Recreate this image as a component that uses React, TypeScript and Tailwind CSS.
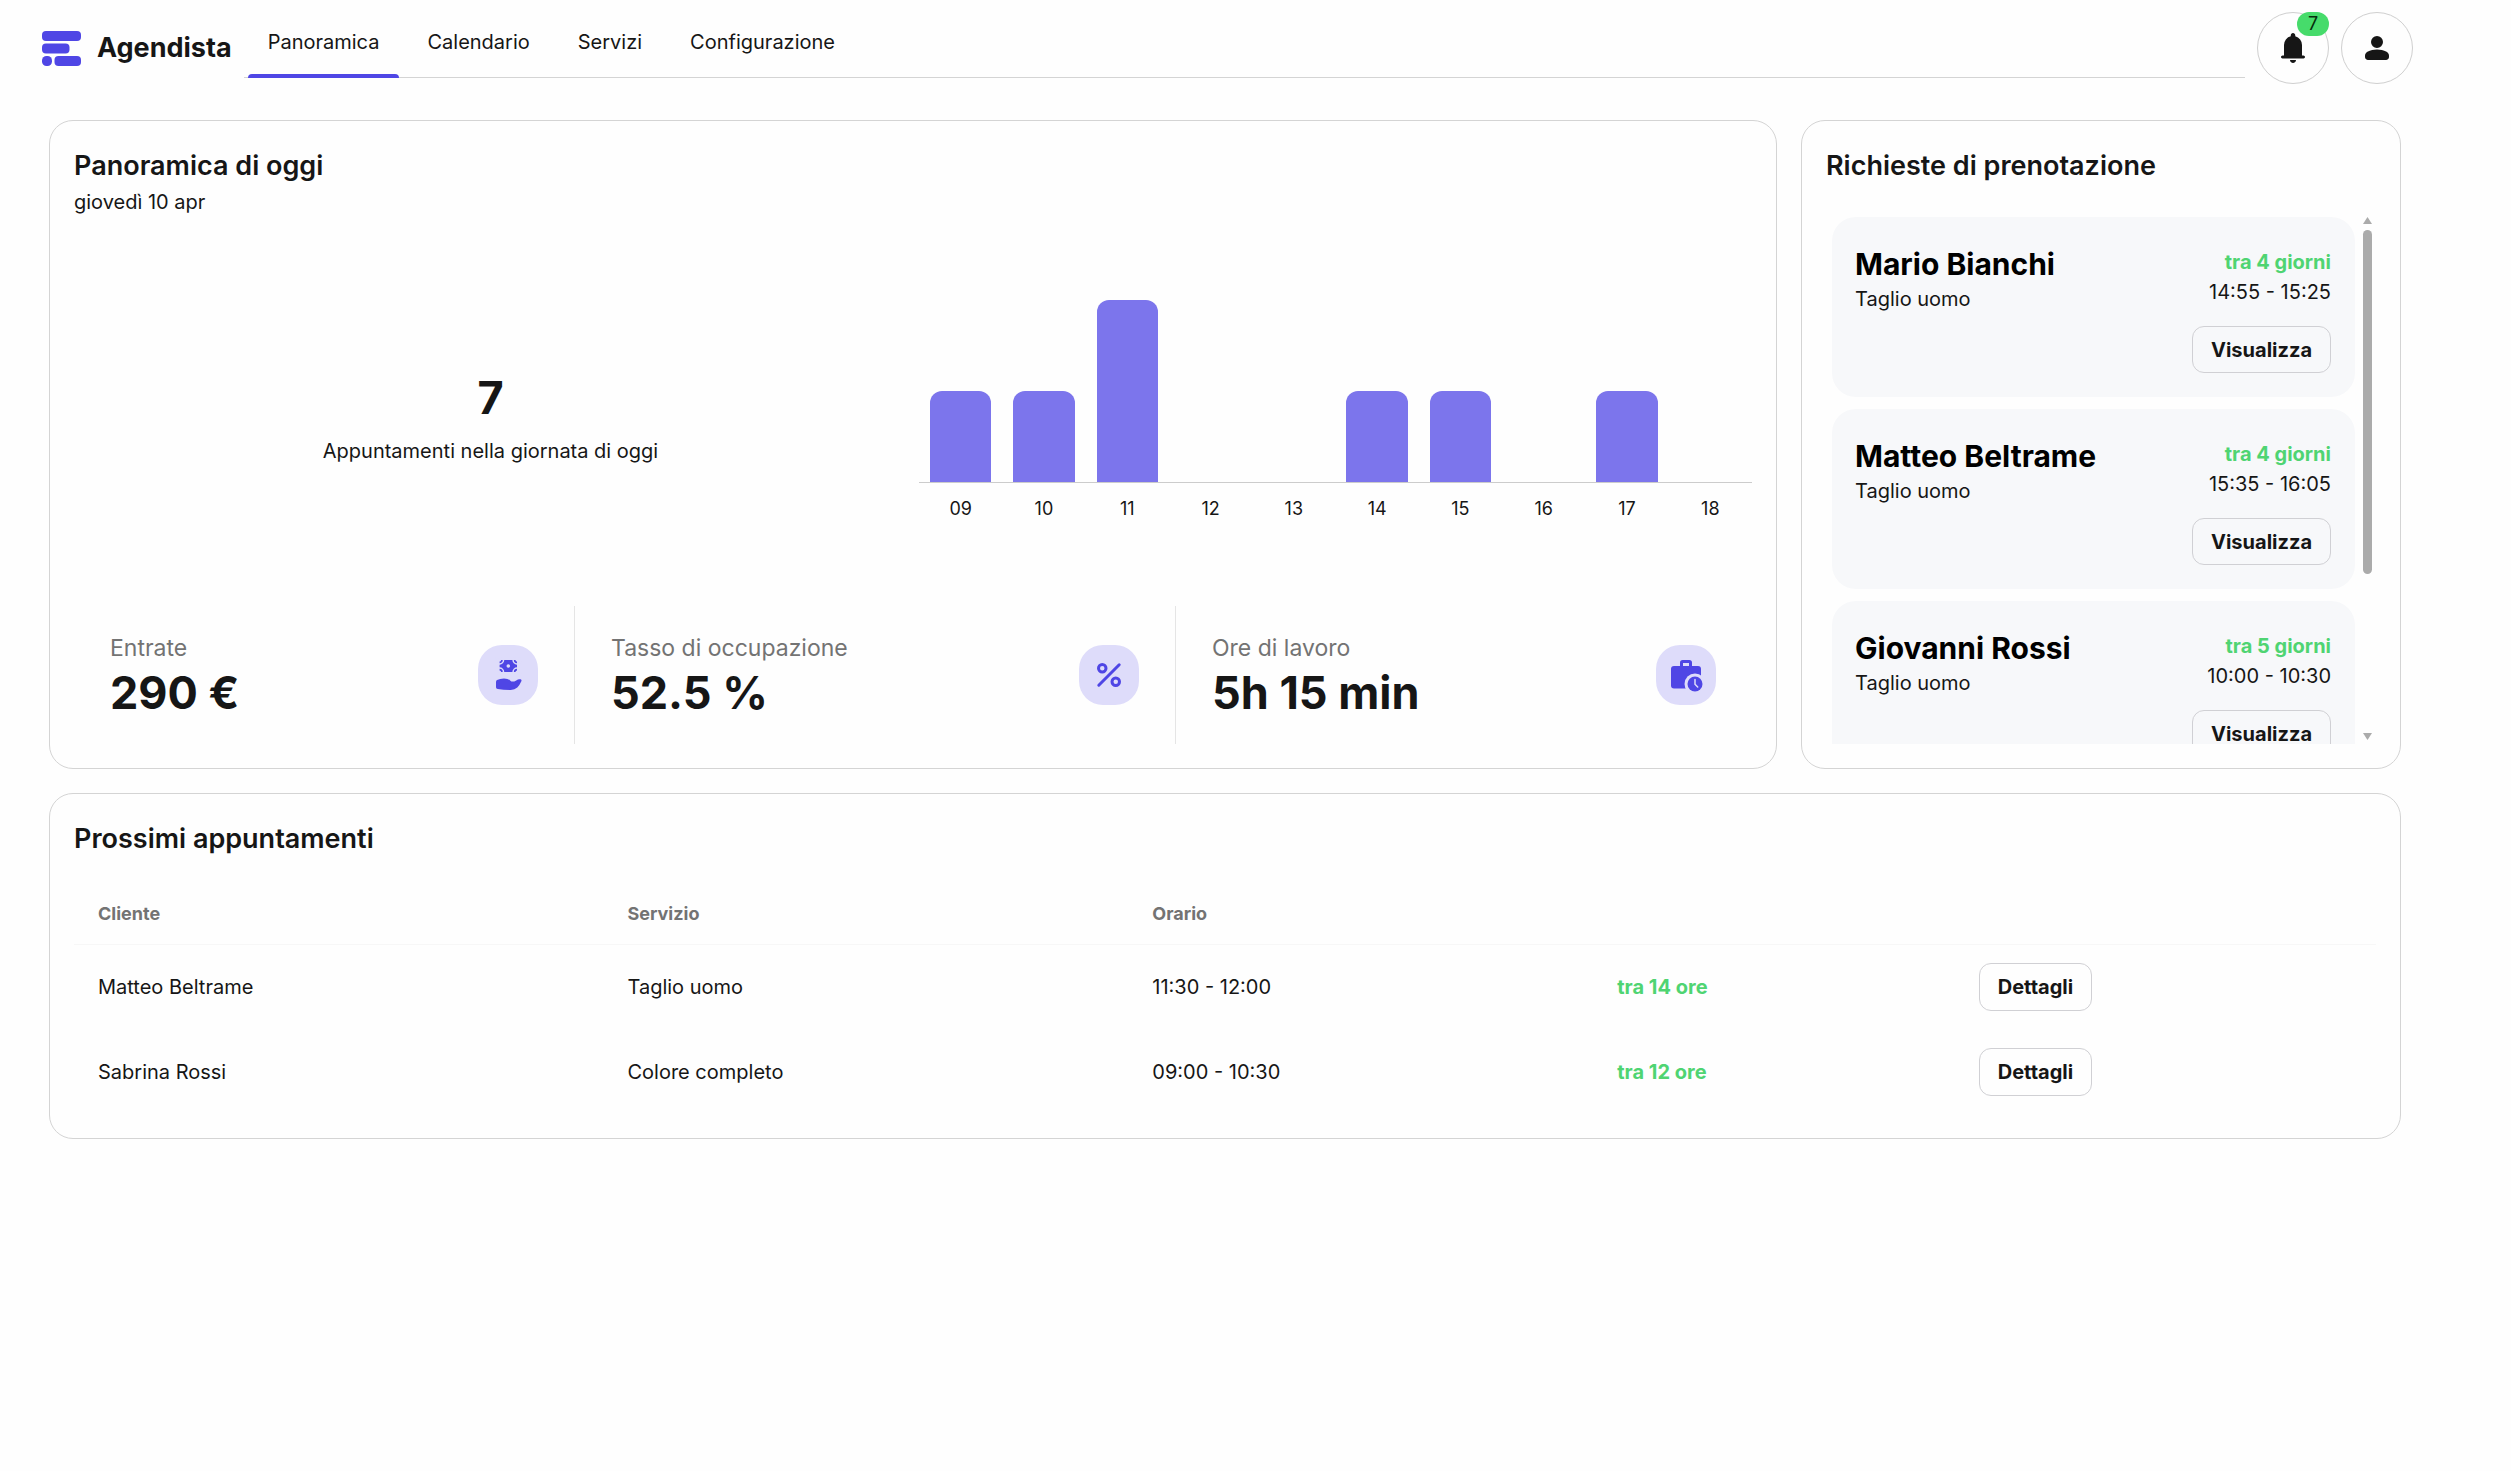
import React from "react";

const tabs = ["Panoramica", "Calendario", "Servizi", "Configurazione"];

const hours = [
  { label: "09", count: 1 },
  { label: "10", count: 1 },
  { label: "11", count: 2 },
  { label: "12", count: 0 },
  { label: "13", count: 0 },
  { label: "14", count: 1 },
  { label: "15", count: 1 },
  { label: "16", count: 0 },
  { label: "17", count: 1 },
  { label: "18", count: 0 },
];

const requests = [
  { name: "Mario Bianchi", service: "Taglio uomo", when: "tra 4 giorni", time: "14:55 - 15:25" },
  { name: "Matteo Beltrame", service: "Taglio uomo", when: "tra 4 giorni", time: "15:35 - 16:05" },
  { name: "Giovanni Rossi", service: "Taglio uomo", when: "tra 5 giorni", time: "10:00 - 10:30" },
];

const appointments = [
  { client: "Matteo Beltrame", service: "Taglio uomo", time: "11:30 - 12:00", when: "tra 14 ore" },
  { client: "Sabrina Rossi", service: "Colore completo", time: "09:00 - 10:30", when: "tra 12 ore" },
];

function Logo() {
  return (
    <svg viewBox="0 0 39 35" className="h-[35px] w-[39px] fill-[#4f46e5]" aria-hidden="true">
      <rect width="39" height="10" rx="4" />
      <rect y="12.5" width="27.5" height="10" rx="4" />
      <rect y="25" width="10" height="10" rx="4.5" />
      <rect x="12.5" y="25" width="26.5" height="10" rx="4" />
    </svg>
  );
}

function BellIcon() {
  return (
    <svg viewBox="0 0 24 24" className="size-9 fill-current" aria-hidden="true">
      <path d="M5 19q-.425 0-.712-.288T4 18t.288-.712T5 17h1v-7q0-2.075 1.25-3.687T10.5 4.2v-.7q0-.625.438-1.062T12 2t1.063.438T13.5 3.5v.7q2 .5 3.25 2.113T18 10v7h1q.425 0 .713.288T20 18t-.288.713T19 19zm7 3q-.825 0-1.412-.587T10 20h4q0 .825-.587 1.413T12 22" />
    </svg>
  );
}

function PersonIcon() {
  return (
    <svg viewBox="0 0 24 24" className="size-9 fill-current" aria-hidden="true">
      <path d="M12 12q-1.65 0-2.825-1.175T8 8t1.175-2.825T12 4t2.825 1.175T16 8t-1.175 2.825T12 12m-8 6v-.8q0-.85.438-1.562T5.6 14.55q1.55-.775 3.15-1.162T12 13t3.25.388t3.15 1.162q.725.375 1.163 1.088T20 17.2v.8q0 .825-.587 1.413T18 20H6q-.825 0-1.412-.587T4 18" />
    </svg>
  );
}

function IncomeIcon() {
  return (
    <svg viewBox="0 0 24 24" className="size-9" aria-hidden="true">
      <rect x="6.4" y="2" width="11.6" height="8" fill="#4f46e5" />
      <g fill="none" stroke="#dedcfa" strokeWidth="1">
        <circle cx="6.4" cy="2" r="2.6" />
        <circle cx="18" cy="2" r="2.6" />
        <circle cx="6.4" cy="10" r="2.6" />
        <circle cx="18" cy="10" r="2.6" />
      </g>
      <g fill="#dedcfa">
        <circle cx="6.4" cy="2" r="1" />
        <circle cx="18" cy="2" r="1" />
        <circle cx="6.4" cy="10" r="1" />
        <circle cx="18" cy="10" r="1" />
        <circle cx="12.2" cy="6" r="1.2" />
      </g>
      <path
        d="M4 20.200V16.600Q4 15.800 4.700 15.400 6.600 14.300 9.300 14.300 12 14.300 13.400 15.600 14.200 16.400 15.200 16.400 16.200 16.400 17.200 15.800L18.600 15Q19.400 14.600 20.400 14.900 21.300 15.200 20.900 16.200 19.900 18.600 18.200 20.300 16.500 21.900 13.800 22 9 22 5.200 21.400 4 21.200 4 20.200"
        fill="#4f46e5"
      />
    </svg>
  );
}

function PercentIcon() {
  return (
    <svg
      viewBox="0 0 24 24"
      className="size-9"
      fill="none"
      stroke="#4f46e5"
      strokeWidth="2"
      strokeLinecap="round"
      aria-hidden="true"
    >
      <circle cx="7.500" cy="7.500" r="2.500" />
      <circle cx="16.500" cy="16.500" r="2.500" />
      <path d="M5.200 18.800 18.800 5.200" />
    </svg>
  );
}

function WorkHoursIcon() {
  return (
    <svg viewBox="0 0 24 24" className="size-9" aria-hidden="true">
      <path d="M9 7V3.800Q9 3 9.800 3h4.400q.8 0 .8.800V7" fill="none" stroke="#4f46e5" strokeWidth="2" />
      <rect x="2" y="6" width="20" height="15" rx="2" fill="#4f46e5" />
      <circle cx="18" cy="18" r="7" fill="#dedcfa" />
      <circle cx="18" cy="18" r="5" fill="#4f46e5" />
      <path d="M18 15v3.200l1.800 1.800" fill="none" stroke="#dedcfa" strokeWidth="1" strokeLinecap="round" />
    </svg>
  );
}

function Card({ className, children }: { className: string; children: React.ReactNode }) {
  return (
    <section className={`rounded-3xl border border-[#d4d4d4] bg-[#fefefe] p-6 ${className}`}>{children}</section>
  );
}

function CardTitle({ children }: { children: React.ReactNode }) {
  return <h2 className="text-[27px] leading-[42px] font-semibold">{children}</h2>;
}

function OutlineButton({ children }: { children: React.ReactNode }) {
  return (
    <button className="h-12 rounded-xl border border-[#d0d0d4] px-[18px] text-xl font-bold whitespace-nowrap">
      {children}
    </button>
  );
}

function Stat({ label, value, icon }: { label: string; value: string; icon: React.ReactNode }) {
  return (
    <div className="flex items-center justify-between px-9 py-6">
      <div>
        <p className="text-[23px] leading-9 text-[#737373]">{label}</p>
        <p className="text-[45px] leading-[54px] font-bold">{value}</p>
      </div>
      <div className="flex size-[60px] items-center justify-center rounded-3xl bg-[#dedcfa]">{icon}</div>
    </div>
  );
}

function Header() {
  return (
    <header className="flex h-24 items-center pl-[42px]">
      <a href="#" className="flex items-center gap-4">
        <Logo />
        <span className="text-[27px] font-bold">Agendista</span>
      </a>
      <nav className="ml-3 flex h-[60px] flex-1 gap-2 border-b border-[#d4d4d4] pl-1">
        {tabs.map((tab, i) => (
          <a
            key={tab}
            href="#"
            aria-current={i === 0 ? "page" : undefined}
            className="relative px-5 pt-2 text-xl leading-8"
          >
            {tab}
            {i === 0 && <span className="absolute inset-x-0 -bottom-px h-1 rounded-t bg-[#4f46e5]" />}
          </a>
        ))}
      </nav>
      <div className="ml-3 flex gap-3">
        <button
          aria-label="Notifiche"
          className="relative flex size-[72px] items-center justify-center rounded-full border border-[#cfcfcf]"
        >
          <BellIcon />
          <span className="absolute -top-px -right-px flex h-6 w-8 items-center justify-center rounded-full bg-[#46db6b] text-lg text-[#052e0c]">
            7
          </span>
        </button>
        <button
          aria-label="Profilo"
          className="flex size-[72px] items-center justify-center rounded-full border border-[#cfcfcf]"
        >
          <PersonIcon />
        </button>
      </div>
    </header>
  );
}

function BarChart() {
  return (
    <div>
      <div className="flex h-[183px] items-end border-b border-[#cccccc]">
        {hours.map((h) => (
          <div key={h.label} className="flex h-full flex-1 items-end px-[11px]">
            {h.count > 0 && (
              <div className="w-full rounded-t-xl bg-[#7c75ec]" style={{ height: `${h.count * 50}%` }} />
            )}
          </div>
        ))}
      </div>
      <div className="mt-3 flex">
        {hours.map((h) => (
          <span key={h.label} className="flex-1 text-center text-lg leading-7">
            {h.label}
          </span>
        ))}
      </div>
    </div>
  );
}

function Overview() {
  return (
    <Card className="flex min-w-0 flex-col">
      <CardTitle>Panoramica di oggi</CardTitle>
      <p className="text-xl leading-[30px]">giovedì 10 apr</p>
      <div className="grid flex-1 grid-cols-2 items-center gap-3">
        <div className="mt-2 text-center">
          <p className="text-[45px] leading-[66px] font-bold">7</p>
          <p className="mt-1 text-xl leading-8">Appuntamenti nella giornata di oggi</p>
        </div>
        <BarChart />
      </div>
      <div className="grid grid-cols-[501fr_601fr_576fr] divide-x divide-[#e5e5e5]">
        <Stat label="Entrate" value="290 €" icon={<IncomeIcon />} />
        <Stat label="Tasso di occupazione" value="52.5 %" icon={<PercentIcon />} />
        <Stat label="Ore di lavoro" value="5h 15 min" icon={<WorkHoursIcon />} />
      </div>
    </Card>
  );
}

function Requests() {
  return (
    <Card className="flex h-[649px] flex-col">
      <CardTitle>Richieste di prenotazione</CardTitle>
      <div className="mt-[30px] flex min-h-0 flex-1 gap-2 pr-1 pl-1.5">
        <ul className="flex flex-1 flex-col gap-3 overflow-y-auto [scrollbar-width:none]">
          {requests.map((r) => (
            <li
              key={r.name}
              className="flex h-[180px] shrink-0 justify-between rounded-3xl bg-[#f7f8fa] py-6 pr-6 pl-[23px]"
            >
              <div className="pt-1">
                <h3 className="text-[30px] leading-[38px] font-bold text-black">{r.name}</h3>
                <p className="text-xl leading-8">{r.service}</p>
              </div>
              <div className="flex flex-col items-end pt-1.5">
                <p className="text-xl leading-[30px] font-bold text-[#4fd472]">{r.when}</p>
                <p className="mb-[19px] text-xl leading-[30px]">{r.time}</p>
                <OutlineButton>Visualizza</OutlineButton>
              </div>
            </li>
          ))}
        </ul>
        <div className="flex w-[9px] flex-col justify-between" aria-hidden="true">
          <svg viewBox="0 0 9 7" className="h-[7px] w-[9px] fill-[#ababab]">
            <path d="M4.500 0 9 7H0z" />
          </svg>
          <div className="mt-1.5 mb-1 flex-1">
            <div className="h-[69%] rounded-full bg-[#ababab]" />
          </div>
          <svg viewBox="0 0 9 7" className="mb-1 h-[7px] w-[9px] fill-[#ababab]">
            <path d="M0 0h9L4.500 7z" />
          </svg>
        </div>
      </div>
    </Card>
  );
}

function Appointments() {
  return (
    <Card className="mt-6">
      <CardTitle>Prossimi appuntamenti</CardTitle>
      <table className="mt-6 w-full table-fixed text-left">
        <colgroup>
          <col className="w-[23%]" />
          <col className="w-[22.8%]" />
          <col className="w-[20.2%]" />
          <col className="w-[15.7%]" />
          <col />
        </colgroup>
        <thead>
          <tr className="h-[60px] border-b border-[#f7f7f7] text-lg text-[#737373]">
            <th className="px-6 font-bold">Cliente</th>
            <th className="px-6 font-bold">Servizio</th>
            <th className="px-6 font-bold">Orario</th>
            <td />
            <td />
          </tr>
        </thead>
        <tbody>
          {appointments.map((a) => (
            <tr key={a.client} className="h-[85px] text-xl">
              <td className="px-6">{a.client}</td>
              <td className="px-6">{a.service}</td>
              <td className="px-6">{a.time}</td>
              <td className="px-6 font-bold text-[#4fd472]">{a.when}</td>
              <td className="px-6">
                <OutlineButton>Dettagli</OutlineButton>
              </td>
            </tr>
          ))}
        </tbody>
      </table>
    </Card>
  );
}

export default function App() {
  return (
    <div className="min-h-screen bg-[#fefefe] pr-[98px] font-['Inter','Liberation_Sans',sans-serif] text-[#161616]">
      <Header />
      <main className="pt-6 pr-3 pl-[49px]">
        <div className="grid grid-cols-[minmax(0,1fr)_600px] gap-6">
          <Overview />
          <Requests />
        </div>
        <Appointments />
      </main>
    </div>
  );
}
